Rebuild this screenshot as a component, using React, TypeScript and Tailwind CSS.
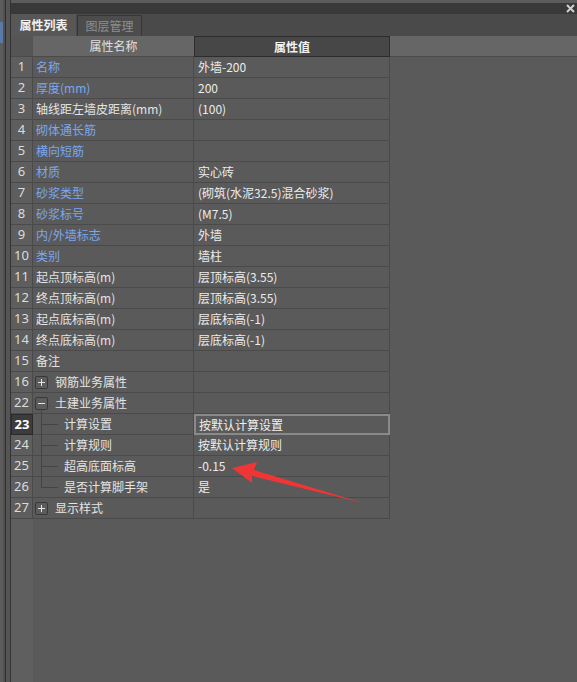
import { Fragment } from 'react';

type Row = {
  no: string;
  name: string;
  value?: string;
  blue?: boolean;
  kind?: 'plus' | 'minus' | 'child' | 'last';
};

const rows: Row[] = [
  { no: '1', name: '名称', value: '外墙-200', blue: true },
  { no: '2', name: '厚度(mm)', value: '200', blue: true },
  { no: '3', name: '轴线距左墙皮距离(mm)', value: '(100)' },
  { no: '4', name: '砌体通长筋', blue: true },
  { no: '5', name: '横向短筋', blue: true },
  { no: '6', name: '材质', value: '实心砖', blue: true },
  { no: '7', name: '砂浆类型', value: '(砌筑(水泥32.5)混合砂浆)', blue: true },
  { no: '8', name: '砂浆标号', value: '(M7.5)', blue: true },
  { no: '9', name: '内/外墙标志', value: '外墙', blue: true },
  { no: '10', name: '类别', value: '墙柱', blue: true },
  { no: '11', name: '起点顶标高(m)', value: '层顶标高(3.55)' },
  { no: '12', name: '终点顶标高(m)', value: '层顶标高(3.55)' },
  { no: '13', name: '起点底标高(m)', value: '层底标高(-1)' },
  { no: '14', name: '终点底标高(m)', value: '层底标高(-1)' },
  { no: '15', name: '备注' },
  { no: '16', name: '钢筋业务属性', kind: 'plus' },
  { no: '22', name: '土建业务属性', kind: 'minus' },
  { no: '23', name: '计算设置', value: '按默认计算设置', kind: 'child' },
  { no: '24', name: '计算规则', value: '按默认计算规则', kind: 'child' },
  { no: '25', name: '超高底面标高', value: '-0.15', kind: 'child' },
  { no: '26', name: '是否计算脚手架', value: '是', kind: 'last' },
  { no: '27', name: '显示样式', kind: 'plus' },
];

const font = { fontFamily: '"Noto Sans CJK SC", "Microsoft YaHei", sans-serif' };

const ToggleBox = ({ minus }: { minus?: boolean }) => (
  <span className="relative w-[13px] h-[13px] rounded-[2px] border border-[#383838] bg-[#5c5c5c] shrink-0 flex items-center justify-center">
    <span className="absolute w-[7px] h-px bg-[#e6e6e6]" />
    {!minus && <span className="absolute w-px h-[7px] bg-[#e6e6e6]" />}
  </span>
);

const NameCell = ({ row }: { row: Row }) => {
  const color = row.blue ? 'text-[#7ba7ee]' : 'text-[#e4e4e4]';
  if (row.kind === 'plus' || row.kind === 'minus') {
    return (
      <div className="relative h-full flex items-center pl-[2px] gap-[7px] border-r border-b border-[#4a4a4a]">
        <ToggleBox minus={row.kind === 'minus'} />
        <span className={color}>{row.name}</span>
        {row.kind === 'minus' && (
          <span className="absolute left-[8px] top-[16px] bottom-0 w-px bg-[#444]" />
        )}
      </div>
    );
  }
  if (row.kind === 'child' || row.kind === 'last') {
    return (
      <div className="relative h-full flex items-center pl-[31px] border-r border-b border-[#4a4a4a]">
        <span
          className={`absolute left-[8px] top-0 w-px bg-[#444] ${row.kind === 'last' ? 'h-[11px]' : 'h-[21px]'}`}
        />
        <span className="absolute left-[8px] top-[10px] w-[17px] h-px bg-[#444]" />
        <span className={color}>{row.name}</span>
      </div>
    );
  }
  return (
    <div className={`h-full flex items-center pl-[3px] border-r border-b border-[#4a4a4a] ${color}`}>
      {row.name}
    </div>
  );
};

export default function App() {
  return (
    <div className="relative w-[577px] h-[682px] flex bg-[#5a5a5a] overflow-hidden text-[12px]" style={font}>
      {/* left neighbouring panel edge */}
      <div className="flex h-full shrink-0">
        <div className="w-[3px] h-full bg-[#5c5c5c] flex flex-col">
          <div className="h-[22px]" />
          <div className="h-[21px] bg-[#5a78a8]" />
        </div>
        <div className="w-[2px] h-full bg-[#505050]" />
        <div className="w-px h-full bg-[#2e2e2e]" />
        <div className="w-[4px] h-full bg-[#555]" />
        <div className="w-px h-full bg-[#333]" />
      </div>

      <div className="flex-1 flex flex-col">
        <div className="h-[3px] bg-[#5c5c5c]" />
        {/* title bar */}
        <div className="h-[11px] bg-[#393939] flex items-center justify-end pr-[2px]">
          <svg width="9" height="9" viewBox="0 0 9 9">
            <path d="M1 1 L8 8 M8 1 L1 8" stroke="#cfcfcf" strokeWidth="2" />
          </svg>
        </div>
        {/* tabs */}
        <div className="h-[22px] bg-[#4a4a4a] flex items-end">
          <div className="w-[65px] h-[22px] bg-[#575757] flex items-center justify-center font-bold text-[#f0f0f0]">
            属性列表
          </div>
          <div className="w-[65px] h-[21px] ml-px bg-[#4c4c4c] border border-b-0 border-[#363636] flex items-center justify-center text-[#8e8e8e]">
            图层管理
          </div>
        </div>
        {/* header */}
        <div className="grid grid-cols-[22px_161px_196px_1fr] h-[21px]">
          <div className="bg-[#555] border-b border-[#4a4a4a]" />
          <div className="bg-[#666] flex items-center justify-center text-[#e0e0e0] border-b border-[#4a4a4a]">
            属性名称
          </div>
          <div className="bg-[#474747] border border-[#2c2c2c] flex items-center justify-center font-bold text-[#f2f2f2]">
            属性值
          </div>
          <div className="bg-[#666] border-b border-[#4a4a4a]" />
        </div>
        {/* rows */}
        <div className="grid grid-cols-[22px_161px_196px_1fr] auto-rows-[21px]">
          {rows.map((row) => {
            const selected = row.no === '23';
            return (
              <Fragment key={row.no}>
                <div
                  className={
                    selected
                      ? 'flex items-center justify-center bg-[#3c3c3c] border border-[#2a2a2a] font-bold text-white text-[13px]'
                      : 'flex items-center justify-center bg-[#5e5e5e] border-r border-b border-[#4a4a4a] text-[#dcdcdc] text-[13px]'
                  }
                  style={{ fontFamily: '"Noto Sans", sans-serif' }}
                >
                  {row.no}
                </div>
                <NameCell row={row} />
                {selected ? (
                  <div className="flex items-center pl-[3px] border-2 border-[#8a8a8a] text-[#f0f0f0]">
                    {row.value}
                  </div>
                ) : (
                  <div className="flex items-center pl-[4px] border-r border-b border-[#4a4a4a] text-[#ececec]">
                    {row.value}
                  </div>
                )}
                <div />
              </Fragment>
            );
          })}
        </div>
        <div className="flex-1 flex">
          <div className="w-[22px] bg-[#5f5f5f]" />
        </div>
      </div>

      {/* red annotation arrow */}
      <svg className="absolute left-0 top-0 pointer-events-none" width="577" height="682">
        <polygon
          points="232,468 257,462 254,470 363,503 252,476 252,483"
          fill="#ef3535"
        />
      </svg>
    </div>
  );
}
